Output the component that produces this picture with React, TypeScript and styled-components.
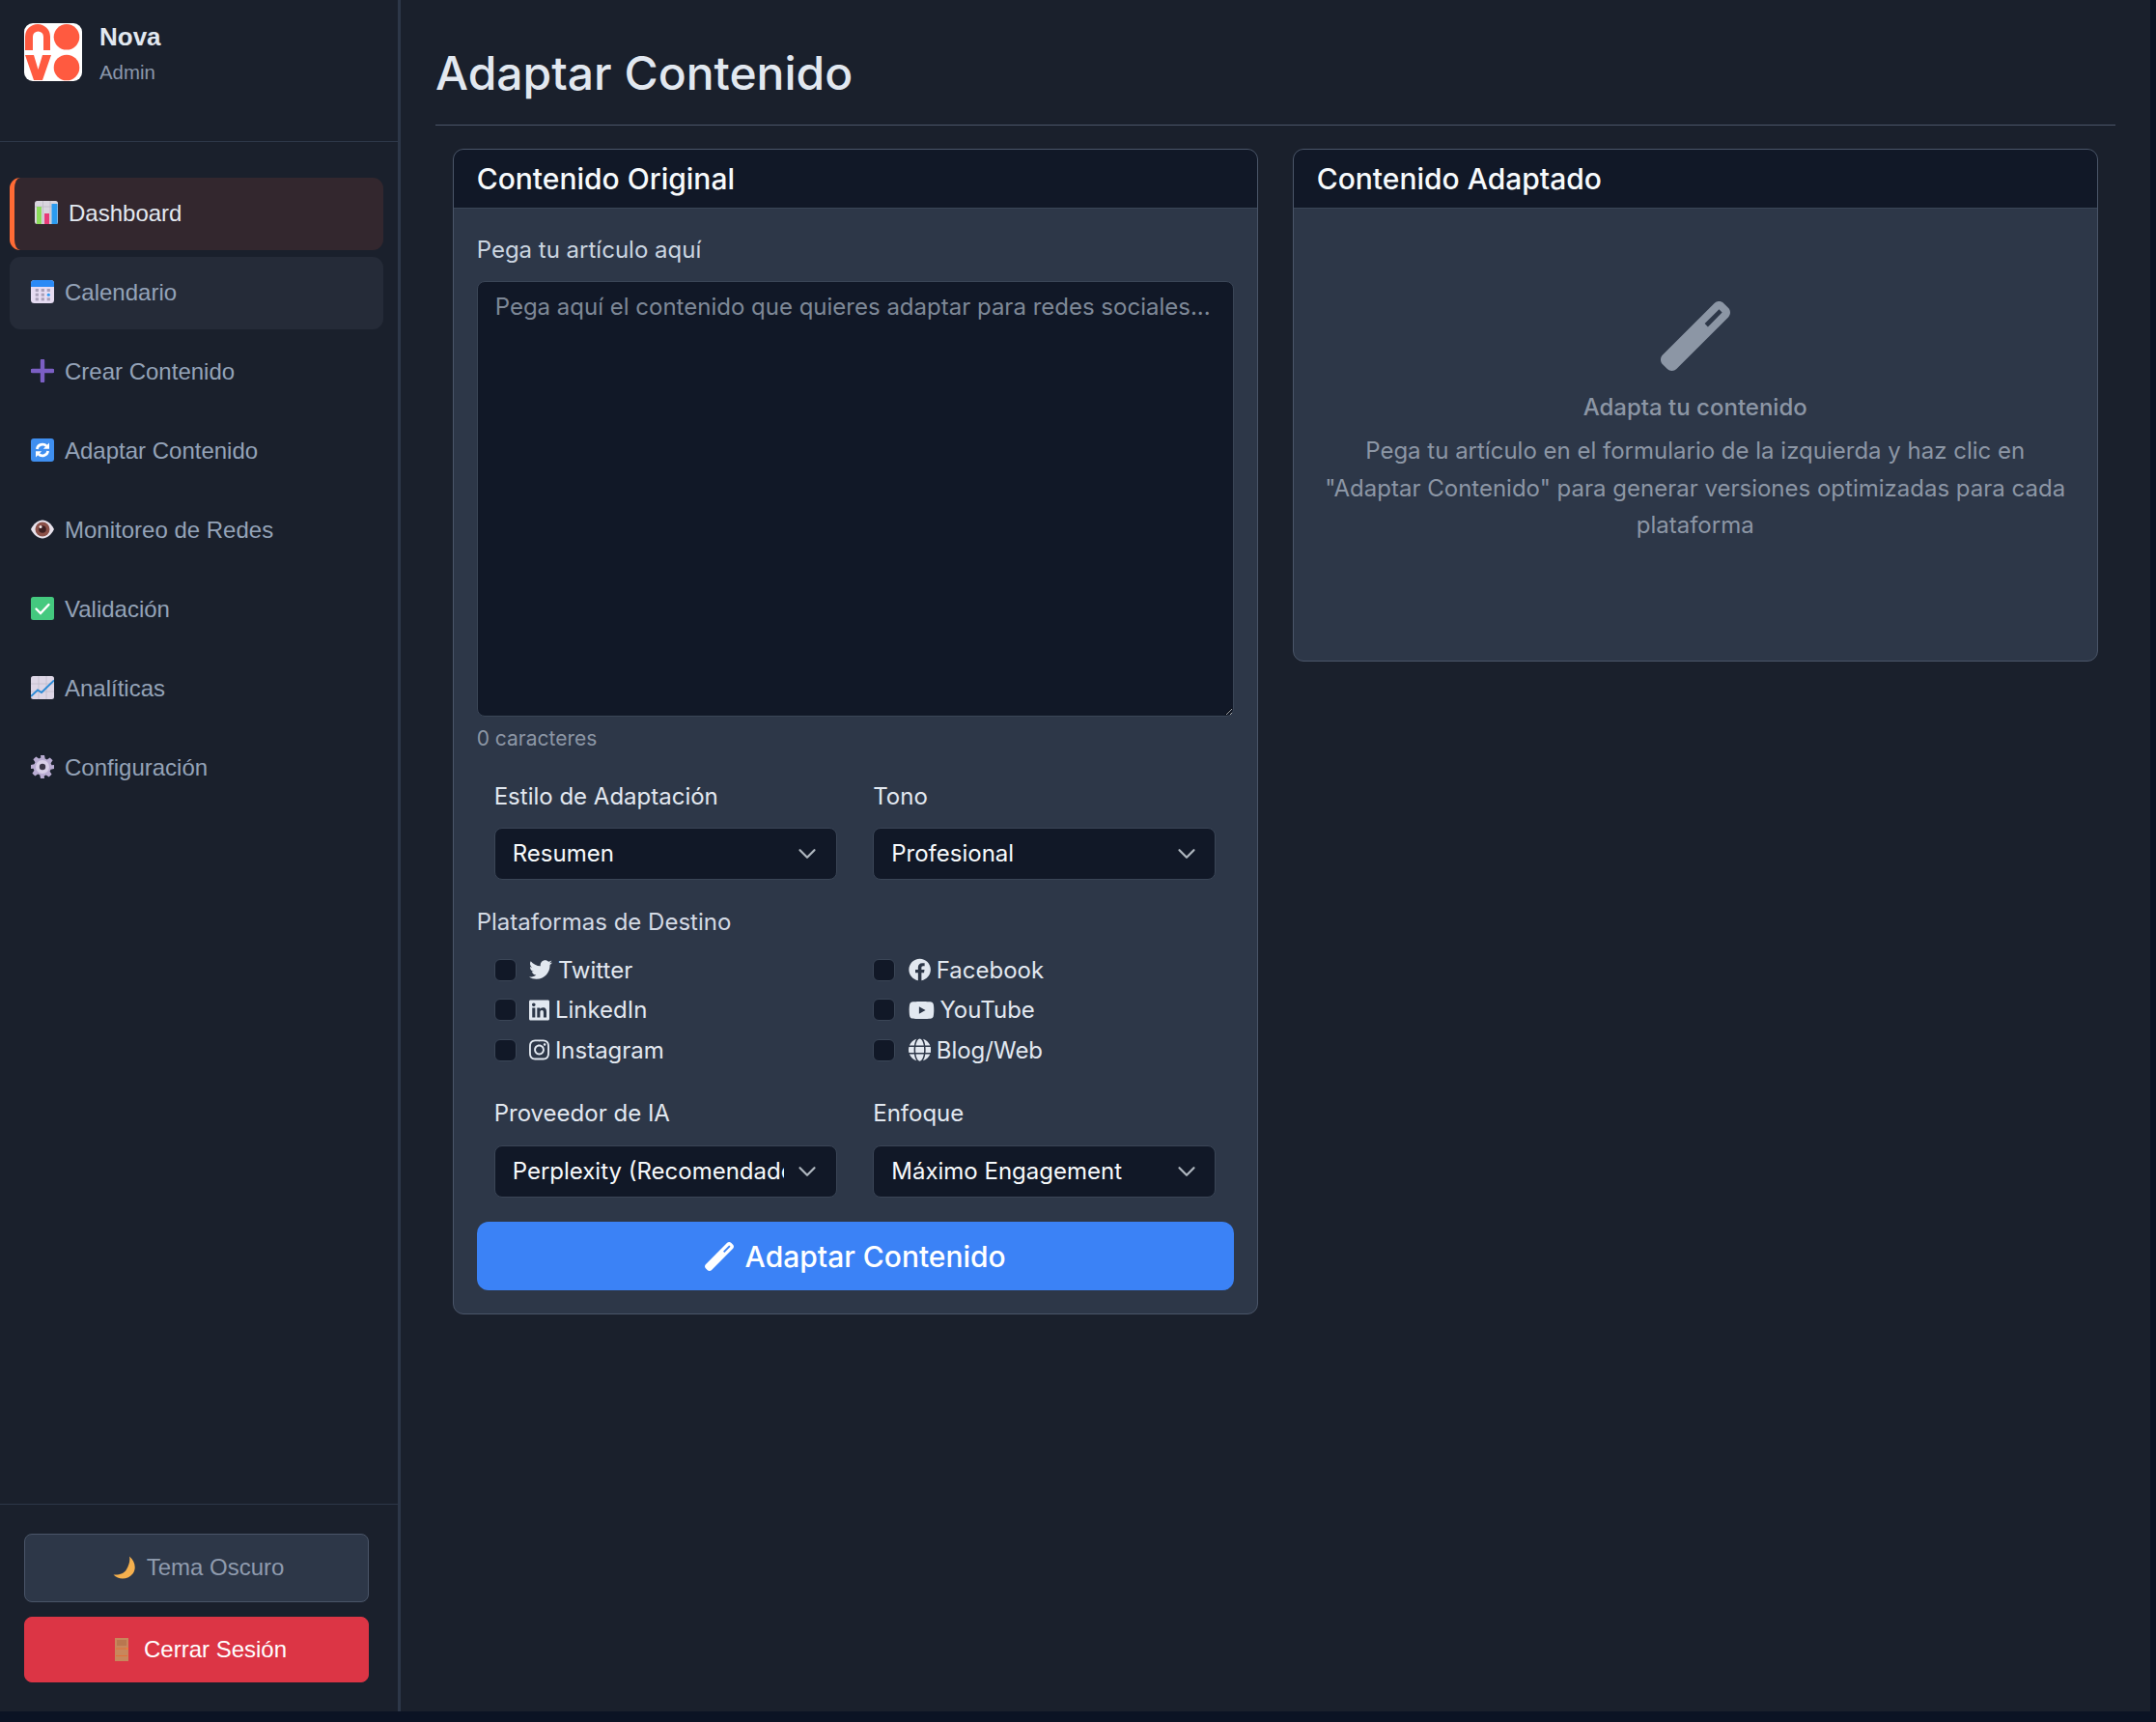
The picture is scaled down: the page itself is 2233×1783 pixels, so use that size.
import React from 'react';
import styled, { createGlobalStyle } from 'styled-components';
import { FaTwitter, FaLinkedin, FaInstagram, FaFacebook, FaYoutube, FaGlobe } from 'react-icons/fa';
import { FaWandMagic } from 'react-icons/fa6';

const GlobalStyle = createGlobalStyle`
  * { box-sizing: border-box; }
  body {
    margin: 0;
    background: #0b1324;
    font-family: 'Inter', 'Liberation Sans', sans-serif;
  }
`;

const chevron =
  "url(\"data:image/svg+xml,%3csvg xmlns='http://www.w3.org/2000/svg' viewBox='0 0 16 16'%3e%3cpath fill='none' stroke='%23adb5bd' stroke-linecap='round' stroke-linejoin='round' stroke-width='1.8' d='m2 5 6 6 6-6'/%3e%3c/svg%3e\")";

const Shell = styled.div`
  display: flex;
  width: 2227px;
  height: 1772px;
  background: #1a202c;
`;

const Sidebar = styled.aside`
  width: 415px;
  flex-shrink: 0;
  display: flex;
  flex-direction: column;
  border-right: 3px solid #2d3748;
  font-family: 'Liberation Sans', Arial, sans-serif;
`;

const Brand = styled.div`
  height: 147px;
  padding: 24px 25px 0;
  display: flex;
  gap: 18px;
  border-bottom: 1px solid #2d3748;
`;

const BrandText = styled.div`
  display: flex;
  flex-direction: column;
`;

const BrandName = styled.div`
  font-size: 26px;
  line-height: 28px;
  font-weight: 700;
  color: #e2e8f0;
`;

const BrandRole = styled.div`
  margin-top: 11px;
  font-size: 20.4px;
  line-height: 24px;
  color: #8a97ab;
`;

const Nav = styled.nav`
  display: flex;
  flex-direction: column;
  gap: 7px;
  padding: 37px 15px 0 10px;
`;

const NavItem = styled.a<{ $active?: boolean; $hover?: boolean }>`
  height: 75px;
  display: flex;
  align-items: center;
  padding: 0 0 1.5px ${(p) => (p.$active ? '21px' : '22px')};
  border-left: ${(p) => (p.$active ? '5px solid #ff6b35' : 'none')};
  border-radius: 11px;
  font-size: 24px;
  color: ${(p) => (p.$active ? '#e2e8f0' : '#94a3b8')};
  background: ${(p) => (p.$active ? '#33272e' : p.$hover ? '#252b38' : 'transparent')};
`;

const NavIcon = styled.svg`
  width: 24px;
  height: 24px;
  margin: -1.5px 11px 0 0;
  flex-shrink: 0;
`;

const SideFooter = styled.div`
  margin-top: auto;
  padding: 30px 30px 30px 25px;
  display: flex;
  flex-direction: column;
  gap: 15px;
  border-top: 1px solid #2d3748;
`;

const SideButton = styled.button<{ $danger?: boolean }>`
  height: ${(p) => (p.$danger ? '68px' : '71px')};
  padding: 0 1px 1px 5px;
  display: flex;
  align-items: center;
  justify-content: center;
  gap: 11px;
  border-radius: 8px;
  font-family: inherit;
  font-size: 24px;
  border: 1px solid ${(p) => (p.$danger ? '#dc3545' : '#4a5568')};
  background: ${(p) => (p.$danger ? '#dc3545' : '#2d3748')};
  color: ${(p) => (p.$danger ? '#ffffff' : '#8f9bae')};
`;

const Main = styled.main`
  flex: 1;
  padding: 0 36px;
`;

const PageHeader = styled.div`
  height: 130px;
  padding-top: 47px;
  border-bottom: 1px solid #4a5568;
  margin-bottom: 24px;
`;

const PageTitle = styled.h1`
  margin: 0;
  font-size: 48px;
  line-height: 58px;
  font-weight: 500;
  color: #e2e8f0;
`;

const Columns = styled.div`
  display: grid;
  grid-template-columns: 1fr 1fr;
  gap: 36px;
  padding: 0 18.3px 0 17.7px;
  align-items: start;
`;

const Card = styled.section`
  background: #2d3748;
  border: 1px solid #4a5568;
  border-radius: 11px;
  overflow: hidden;
`;

const CardHeader = styled.h2`
  margin: 0;
  height: 61px;
  padding: 0 24px 1px;
  display: flex;
  align-items: center;
  background: #111827;
  border-bottom: 1px solid #3a4556;
  font-size: 30px;
  font-weight: 500;
  color: #f7fafc;
`;

const CardBody = styled.div`
  padding: 23px 24px 24px;
`;

const Label = styled.label`
  display: block;
  font-size: 24px;
  line-height: 36px;
  color: #e2e8f0;
  margin-bottom: 14.5px;
`;

const LeadLabel = styled(Label)`
  line-height: 40px;
  margin-bottom: 11.5px;
  color: #cbd5e0;
`;

const Textarea = styled.textarea`
  display: block;
  width: 100%;
  height: 451px;
  padding: 8.5px 18px;
  font-family: inherit;
  font-size: 24px;
  line-height: 36px;
  color-scheme: dark;
  background: #111827;
  border: 1px solid #3a4556;
  border-radius: 8px;
  color: #e2e8f0;
  &::placeholder {
    color: #7e8897;
  }
`;

const CharCount = styled.div`
  margin-top: 8.5px;
  font-size: 21px;
  line-height: 30px;
  color: #8c96a5;
`;

const FieldRow = styled.div<{ $top: string }>`
  display: grid;
  grid-template-columns: 1fr 1fr;
  gap: 37.7px;
  padding: 0 18.6px 0 18px;
  margin-top: ${(p) => p.$top};
`;

const Select = styled.select`
  display: block;
  width: 100%;
  height: 54.3px;
  padding: 0 54px 1px 18px;
  appearance: none;
  font-family: inherit;
  font-size: 24px;
  color: #f7fafc;
  background-color: #111827;
  background-image: ${chevron};
  background-repeat: no-repeat;
  background-position: right 19.5px center;
  background-size: 20px 20px;
  border: 1px solid #3a4556;
  border-radius: 8px;
`;

const SectionLabel = styled(Label)`
  margin: 26px 0 10.3px;
  color: #d4dae4;
`;

const CheckGrid = styled.div`
  display: grid;
  grid-template-columns: 1fr 1fr;
  column-gap: 37.7px;
  grid-auto-rows: 41.5px;
  padding: 0 18.6px 0 18px;
`;

const CheckItem = styled.label`
  display: flex;
  align-items: center;
  font-size: 24px;
  color: #e2e8f0;
`;

const BrandIcon = styled.span<{ $width: number }>`
  display: flex;
  flex-shrink: 0;
  width: ${(p) => p.$width}px;
  margin-right: 5.7px;
  svg {
    width: 100%;
    height: 24px;
  }
`;

const Check = styled.input`
  appearance: none;
  width: 23px;
  height: 23px;
  margin: 0 13.5px 0 0;
  background: #111827;
  border: 1px solid #3a4556;
  border-radius: 6px;
`;

const SubmitButton = styled.button`
  width: 100%;
  height: 71px;
  margin-top: 25px;
  display: flex;
  align-items: center;
  justify-content: center;
  gap: 12px;
  background: #3b82f6;
  border: none;
  border-radius: 12px;
  font-family: inherit;
  font-size: 30px;
  font-weight: 500;
  color: #ffffff;
`;

const EmptyState = styled.div`
  height: 468px;
  padding: 96px 24px 0;
  display: flex;
  flex-direction: column;
  align-items: center;
  text-align: center;
  color: #8c96a5;
  font-size: 24px;
`;

const EmptyTitle = styled.div`
  margin-top: 20px;
  font-weight: 500;
  line-height: 36px;
`;

const EmptyText = styled.p`
  margin: 8px 0 0;
  line-height: 38.5px;
`;

const Logo = () => (
  <svg width="60" height="60" viewBox="0 0 60 60">
    <rect width="60" height="60" rx="9" fill="#fff" />
    <path d="M1 28V14a13 13 0 0 1 26 0v14h-7V14a5.500 5.500 0 0 0-11 0v14z" fill="#ff5a40" />
    <circle cx="44" cy="14.300" r="13.300" fill="#ff5a40" />
    <path d="M1 33h9l4.500 15L19 33h9l-9 26h-9z" fill="#ff5a40" />
    <circle cx="44" cy="46" r="13.300" fill="#ff5a40" />
  </svg>
);

const IconDashboard = () => (
  <NavIcon viewBox="0 0 24 24">
    <rect width="24" height="24" rx="2.500" fill="#d9d5de" />
    <path d="M8.500 0v24M16 0v24M0 6h24" stroke="#bdb9c4" strokeWidth=".8" />
    <rect x="2" y="6" width="5" height="18" fill="#8bdc5a" />
    <rect x="10" y="13" width="5" height="11" fill="#e83a78" />
    <rect x="17.500" y="3" width="6" height="21" fill="#2b9bf0" />
  </NavIcon>
);

const IconCalendar = () => (
  <NavIcon viewBox="0 0 24 24">
    <rect width="24" height="24" rx="3.500" fill="#e6dcf2" />
    <path d="M0 7V3.500A3.500 3.500 0 0 1 3.500 0h17A3.500 3.500 0 0 1 24 3.500V7z" fill="#2a8af6" />
    <g fill="#a8a0b8">
      <rect x="4.700" y="9" width="3.200" height="3" />
      <rect x="10.700" y="9" width="3.200" height="3" />
      <rect x="16.700" y="9" width="3.200" height="3" />
      <rect x="4.700" y="13.700" width="3.200" height="3" />
      <rect x="10.700" y="13.700" width="3.200" height="3" />
      <rect x="4.700" y="18.300" width="3.200" height="3" />
      <rect x="10.700" y="18.300" width="3.200" height="3" />
      <rect x="16.700" y="18.300" width="3.200" height="3" />
    </g>
    <rect x="16.700" y="13.700" width="3.200" height="3" rx="1.500" fill="#2a9af6" />
  </NavIcon>
);

const IconPlus = () => (
  <NavIcon viewBox="0 0 24 24">
    <path d="M12 1.500v21M1.500 12h21" stroke="#7b5fc4" strokeWidth="4.400" strokeLinecap="round" />
  </NavIcon>
);

const IconAdapt = () => (
  <NavIcon viewBox="0 0 24 24">
    <rect width="24" height="24" rx="3" fill="#3f8ff0" />
    <path d="M6.300 11a5.800 5.800 0 0 1 10-3M17.700 13a5.800 5.800 0 0 1-10 3" fill="none" stroke="#fff" strokeWidth="2.700" />
    <path d="M19 4.500v6.200h-6.200zM5 19.500v-6.200h6.200z" fill="#fff" />
  </NavIcon>
);

const IconEye = () => (
  <NavIcon viewBox="0 0 24 24">
    <path d="M0 12C3 6 7.500 2.500 12 2.500S21 6 24 12c-3 6-7.500 9.500-12 9.500S3 18 0 12z" fill="#e8e2ec" />
    <circle cx="12" cy="12" r="7.500" fill="#8a5048" />
    <circle cx="12" cy="12" r="3.800" fill="#3c1e20" />
    <circle cx="10" cy="9.500" r="1.500" fill="#f4eaea" />
  </NavIcon>
);

const IconCheck = () => (
  <NavIcon viewBox="0 0 24 24">
    <rect width="24" height="24" rx="2.500" fill="#44c97f" />
    <path d="M5.500 12.500l4.500 4.500 8.500-9" fill="none" stroke="#fff" strokeWidth="2.400" strokeLinecap="round" />
  </NavIcon>
);

const IconChart = () => (
  <NavIcon viewBox="0 0 24 24">
    <rect width="24" height="24" rx="2.500" fill="#ddd6e6" />
    <path d="M8 0v24M16 0v24M0 8h24M0 16h24" stroke="#c2bcca" strokeWidth=".8" />
    <path d="M0 21l7-6.500 4 2.500L24 4.500" fill="none" stroke="#2a8ad6" strokeWidth="1.800" />
  </NavIcon>
);

const IconGear = () => (
  <NavIcon viewBox="0 0 24 24">
    <path d="M10 0h4l.7 3.500 2 .9 3-2 2.900 2.900-2 3 .9 2L24 10v4l-3.500.7-.9 2 2 3-2.900 2.900-3-2-2 .9L14 24h-4l-.7-3.500-2-.9-3 2-2.900-2.900 2-3-.9-2L0 14v-4l3.500-.7.9-2-2-3 2.900-2.900 3 2 2-.9z" fill="#b9acd2" />
    <circle cx="12" cy="12" r="7" fill="#d8cfe8" />
    <circle cx="12" cy="12" r="3.200" fill="#3a3648" />
  </NavIcon>
);

const IconMoon = () => (
  <svg width="24" height="24" viewBox="0 0 24 24">
    <path d="M17 .5c6 5 7.500 12.500 3.500 18S6.500 26 .5 19.500c6 .5 11-1 13.500-5.500s4-9 3-13.500z" fill="#f5b04e" />
  </svg>
);

const IconDoor = () => (
  <svg width="24" height="24" viewBox="0 0 24 24">
    <rect x="5" width="14" height="24" fill="#c8875c" />
    <rect x="7" y="2" width="10" height="6" fill="#b9774f" />
    <path d="M6 11h12M6 18.500h12" stroke="#e0703a" strokeWidth="1" />
    <circle cx="17.500" cy="11" r="1" fill="#f08030" />
  </svg>
);

const navItems = [
  { label: 'Dashboard', icon: <IconDashboard />, active: true },
  { label: 'Calendario', icon: <IconCalendar />, hover: true },
  { label: 'Crear Contenido', icon: <IconPlus /> },
  { label: 'Adaptar Contenido', icon: <IconAdapt /> },
  { label: 'Monitoreo de Redes', icon: <IconEye /> },
  { label: 'Validación', icon: <IconCheck /> },
  { label: 'Analíticas', icon: <IconChart /> },
  { label: 'Configuración', icon: <IconGear /> },
];

const platforms = [
  { label: 'Twitter', icon: <FaTwitter />, width: 24 },
  { label: 'Facebook', icon: <FaFacebook />, width: 23.25 },
  { label: 'LinkedIn', icon: <FaLinkedin />, width: 21 },
  { label: 'YouTube', icon: <FaYoutube />, width: 27 },
  { label: 'Instagram', icon: <FaInstagram />, width: 21 },
  { label: 'Blog/Web', icon: <FaGlobe />, width: 23.25 },
];

export default function App() {
  return (
    <>
      <GlobalStyle />
      <Shell>
        <Sidebar>
          <Brand>
            <Logo />
            <BrandText>
              <BrandName>Nova</BrandName>
              <BrandRole>Admin</BrandRole>
            </BrandText>
          </Brand>
          <Nav>
            {navItems.map((item) => (
              <NavItem key={item.label} $active={item.active} $hover={item.hover}>
                {item.icon}
                {item.label}
              </NavItem>
            ))}
          </Nav>
          <SideFooter>
            <SideButton>
              <IconMoon />
              Tema Oscuro
            </SideButton>
            <SideButton $danger>
              <IconDoor />
              Cerrar Sesión
            </SideButton>
          </SideFooter>
        </Sidebar>
        <Main>
          <PageHeader>
            <PageTitle>Adaptar Contenido</PageTitle>
          </PageHeader>
          <Columns>
            <Card>
              <CardHeader>Contenido Original</CardHeader>
              <CardBody>
                <LeadLabel>Pega tu artículo aquí</LeadLabel>
                <Textarea placeholder="Pega aquí el contenido que quieres adaptar para redes sociales..." />
                <CharCount>0 caracteres</CharCount>
                <FieldRow $top="26.5px">
                  <div>
                    <Label>Estilo de Adaptación</Label>
                    <Select defaultValue="Resumen">
                      <option>Resumen</option>
                    </Select>
                  </div>
                  <div>
                    <Label>Tono</Label>
                    <Select defaultValue="Profesional">
                      <option>Profesional</option>
                    </Select>
                  </div>
                </FieldRow>
                <SectionLabel>Plataformas de Destino</SectionLabel>
                <CheckGrid>
                  {platforms.map((p) => (
                    <CheckItem key={p.label}>
                      <Check type="checkbox" />
                      <BrandIcon $width={p.width}>{p.icon}</BrandIcon>
                      {p.label}
                    </CheckItem>
                  ))}
                </CheckGrid>
                <FieldRow $top="27.4px">
                  <div>
                    <Label>Proveedor de IA</Label>
                    <Select defaultValue="Perplexity (Recomendado)">
                      <option>Perplexity (Recomendado)</option>
                    </Select>
                  </div>
                  <div>
                    <Label>Enfoque</Label>
                    <Select defaultValue="Máximo Engagement">
                      <option>Máximo Engagement</option>
                    </Select>
                  </div>
                </FieldRow>
                <SubmitButton>
                  <FaWandMagic size={30} />
                  Adaptar Contenido
                </SubmitButton>
              </CardBody>
            </Card>
            <Card>
              <CardHeader>Contenido Adaptado</CardHeader>
              <EmptyState>
                <FaWandMagic size={72} />
                <EmptyTitle>Adapta tu contenido</EmptyTitle>
                <EmptyText>
                  Pega tu artículo en el formulario de la izquierda y haz clic en "Adaptar Contenido" para generar versiones optimizadas para cada plataforma
                </EmptyText>
              </EmptyState>
            </Card>
          </Columns>
        </Main>
      </Shell>
    </>
  );
}
